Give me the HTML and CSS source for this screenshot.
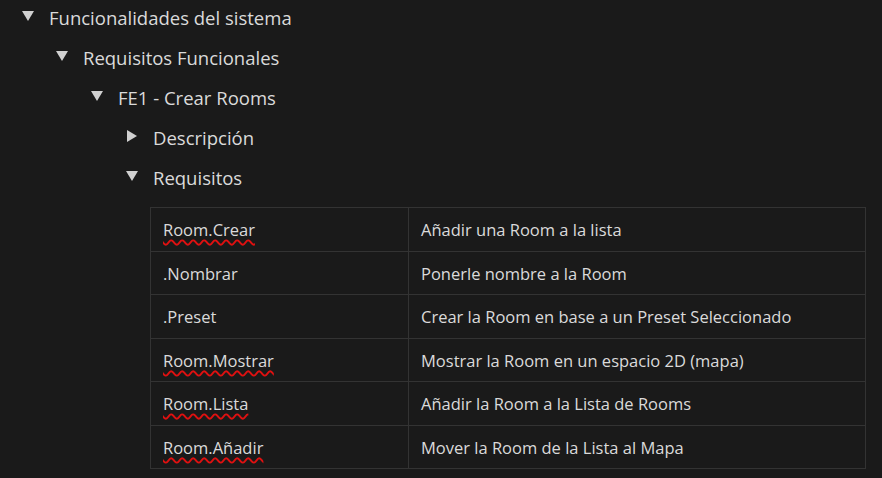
FILE: index.html
```html
<!DOCTYPE html>
<html lang="es">
<head>
<meta charset="utf-8">
<title>Funcionalidades</title>
<link rel="stylesheet" href="styles.css">
</head>
<body>
<div class="page">
  <div class="row lvl0"><span class="tri down"></span><span class="label">Funcionalidades del sistema</span></div>
  <div class="row lvl1"><span class="tri down"></span><span class="label">Requisitos Funcionales</span></div>
  <div class="row lvl2"><span class="tri down"></span><span class="label">FE1 - Crear Rooms</span></div>
  <div class="row lvl3"><span class="tri right"></span><span class="label">Descripción</span></div>
  <div class="row lvl3"><span class="tri down"></span><span class="label">Requisitos</span></div>
  <table class="req">
    <tr><td class="c1"><span class="sp">Room.Crear</span></td><td>Añadir una Room a la lista</td></tr>
    <tr><td class="c1">.Nombrar</td><td>Ponerle nombre a la Room</td></tr>
    <tr><td class="c1">.Preset</td><td>Crear la Room en base a un Preset Seleccionado</td></tr>
    <tr><td class="c1"><span class="sp">Room.Mostrar</span></td><td>Mostrar la Room en un espacio 2D (mapa)</td></tr>
    <tr><td class="c1"><span class="sp">Room.Lista</span></td><td>Añadir la Room a la Lista de Rooms</td></tr>
    <tr><td class="c1"><span class="sp">Room.Añadir</span></td><td>Mover la Room de la Lista al Mapa</td></tr>
  </table>
</div>
</body>
</html>
```

FILE: styles.css
```css
html, body {
  margin: 0;
  padding: 0;
  background: #1a1a1a;
}
body {
  width: 882px;
  height: 478px;
  overflow: hidden;
  font-family: "Open Sans", "Noto Sans", sans-serif;
  color: #dadada;
}
.page {
  margin-top: -3px;
}
.row {
  display: flex;
  align-items: center;
  height: 40px;
  font-size: 18.5px;
}
.lvl0 { padding-left: 22px; }
.lvl1 { padding-left: 56px; }
.lvl2 { padding-left: 91px; }
.lvl3 { padding-left: 126px; }
.tri {
  display: flex;
  align-items: center;
  justify-content: center;
  width: 12px;
  height: 12px;
  margin-right: 15px;
  margin-top: -3px;
}
.tri::before {
  content: "";
  display: block;
  width: 0;
  height: 0;
}
.tri.down::before {
  border-left: 6px solid transparent;
  border-right: 6px solid transparent;
  border-top: 10px solid #d0d0d0;
}
.tri.right::before {
  border-top: 6px solid transparent;
  border-bottom: 6px solid transparent;
  border-left: 10px solid #d0d0d0;
}
.req {
  margin: 10px 0 0 150px;
  width: 716px;
  border-collapse: collapse;
  font-size: 16.5px;
}
.req tr {
  height: 43.5px;
}
.req td {
  border: 1px solid #333333;
  padding: 1px 12px 0 12px;
}
.req td.c1 {
  width: 258px;
  box-sizing: border-box;
}
.sp {
  text-decoration: underline wavy #e01010;
  text-decoration-thickness: 1.5px;
  text-underline-offset: 3px;
}
```
